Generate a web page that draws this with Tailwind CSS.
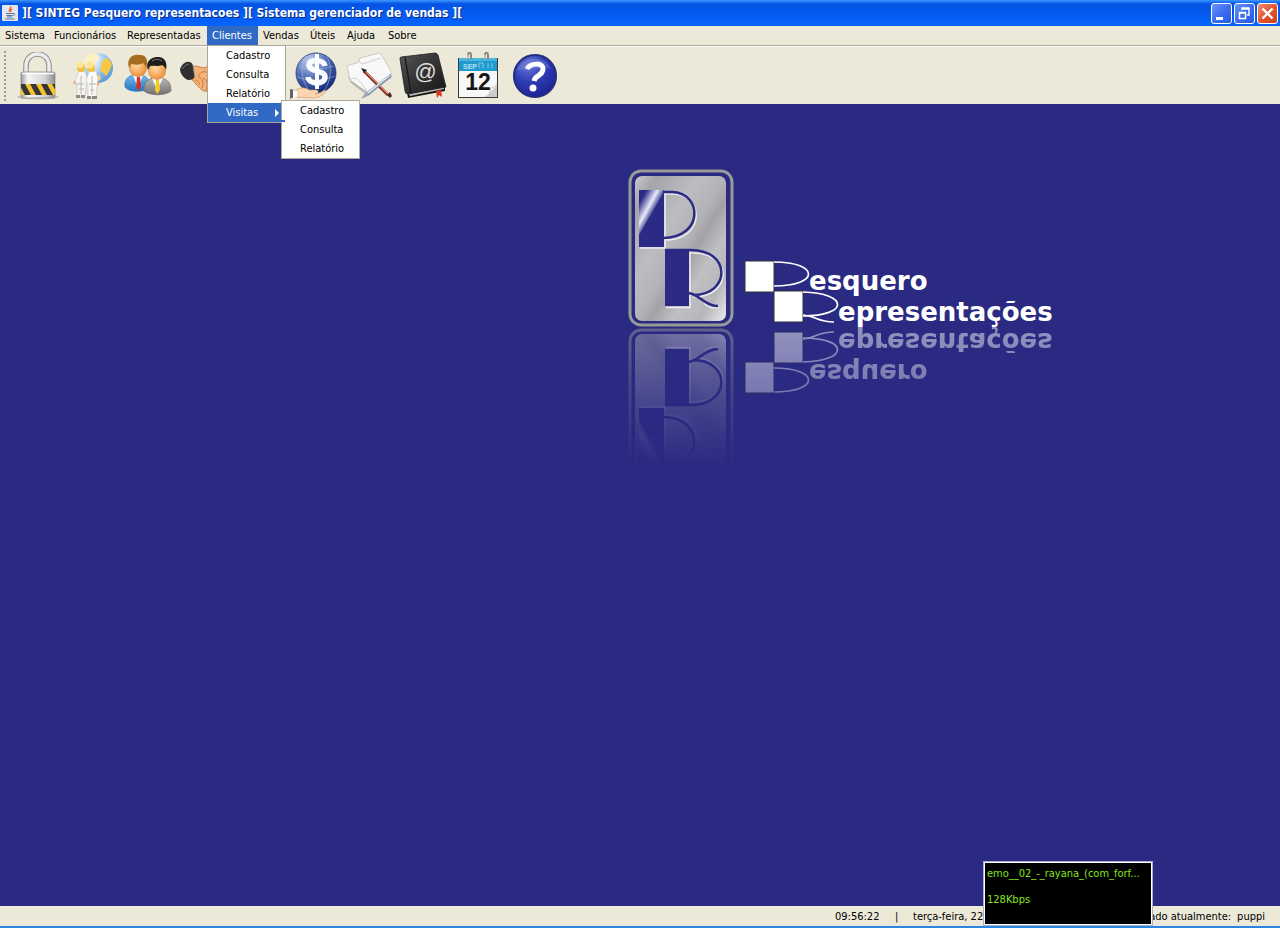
<!DOCTYPE html>
<html lang="pt-BR">
<head>
<meta charset="utf-8">
<title>SINTEG Pesquero representacoes</title>
<script src="https://cdn.jsdelivr.net/npm/@tailwindcss/browser@4"></script>
</head>
<body class="relative flex h-screen flex-col overflow-hidden bg-[#2a2a82] font-['DejaVu_Sans_Condensed','Noto_Sans',sans-serif] text-[11px] leading-[19px] text-black">

<header class="flex h-[26px] shrink-0 items-center justify-between bg-linear-to-b from-[#3d95ff] via-[#0453e4] via-15% to-[#0562fb] to-90% pr-[2px] pl-[2px]">
  <div class="flex items-center gap-1">
    <svg class="size-4" viewBox="0 0 16 16" aria-hidden="true">
      <rect width="16" height="16" rx="1" fill="#e4e4ea"/>
      <path d="M8.500 1.500C10 3 6 4.500 7.500 7M10 4C8 5 8.500 6 8.700 7" fill="none" stroke="#e0642c" stroke-width="1.400"/>
      <path d="M4 8.500H11M4.500 10.500H10.500M5 12H10M11 8.500C13.500 8 13 10.500 11 10.500M3 14H12.500" fill="none" stroke="#54749c" stroke-width="1"/>
    </svg>
    <h1 class="font-['DejaVu_Sans_Condensed','Noto_Sans',sans-serif] text-[12px] leading-[26px] font-bold whitespace-pre text-white [text-shadow:1px_1px_0_#0a2a80]">][ SINTEG Pesquero representacoes ][ Sistema gerenciador de vendas ][</h1>
  </div>
  <div class="flex gap-[2px]">
    <button aria-label="Minimizar" class="size-[21px] rounded-[3px] border border-white bg-linear-to-br from-[#6d96f5] via-[#3c6df0] to-[#2458e4]"><svg viewBox="0 0 19 19"><path d="M4 13H11V16H4Z" fill="#fff"/></svg></button>
    <button aria-label="Restaurar" class="size-[21px] rounded-[3px] border border-white bg-linear-to-br from-[#6d96f5] via-[#3c6df0] to-[#2458e4]"><svg viewBox="0 0 19 19"><path d="M7 6V4H14V11H12M7 5H14" fill="none" stroke="#fff" stroke-width="1.400"/><path d="M4.500 8.500H10.500V14.500H4.500ZM4 9H11" fill="none" stroke="#fff" stroke-width="1.500"/></svg></button>
    <button aria-label="Fechar" class="size-[21px] rounded-[3px] border border-white bg-linear-to-br from-[#ee8c70] via-[#e2552f] to-[#cf4218]"><svg viewBox="0 0 19 19"><path d="M4.500 4.500L14.500 14.500M14.500 4.500L4.500 14.500" stroke="#fff" stroke-width="2.400"/></svg></button>
  </div>
</header>

<nav class="relative flex h-[20px] shrink-0 border-b border-[#aca899] bg-[#ece9d8]" aria-label="Menu principal">
  <button class="w-[49px] pl-[5px] text-left">Sistema</button>
  <button class="w-[73px] pl-[5px] text-left">Funcionários</button>
  <button class="w-[85px] pl-[5px] text-left">Representadas</button>
  <div class="relative z-10 w-[51px]">
    <button class="w-full bg-[#316ac5] pl-[5px] text-left text-white" aria-expanded="true">Clientes</button>
    <div class="absolute top-[19px] left-0 flex w-[79px] flex-col border border-[#aca899] bg-white" role="menu">
      <button role="menuitem" class="pl-[18px] text-left">Cadastro</button>
      <button role="menuitem" class="pl-[18px] text-left">Consulta</button>
      <button role="menuitem" class="pl-[18px] text-left">Relatório</button>
      <div class="relative">
        <button role="menuitem" aria-expanded="true" class="flex w-full items-center justify-between bg-[#316ac5] pr-[6px] pl-[18px] text-white">Visitas
          <svg class="h-2 w-1" viewBox="0 0 4 8" aria-hidden="true"><path d="M0 0L4 4L0 8Z" fill="#fff"/></svg>
        </button>
        <div class="absolute -top-[3px] left-[73px] flex w-[79px] flex-col border border-[#aca899] bg-white" role="menu">
          <button role="menuitem" class="pl-[18px] text-left">Cadastro</button>
          <button role="menuitem" class="pl-[18px] text-left">Consulta</button>
          <button role="menuitem" class="pl-[18px] text-left">Relatório</button>
          <span class="absolute top-[19px] -left-px h-[2px] w-1 bg-[#316ac5]"></span>
        </div>
      </div>
    </div>
  </div>
  <button class="w-[47px] pl-[5px] text-left">Vendas</button>
  <button class="w-[37px] pl-[5px] text-left">Úteis</button>
  <button class="w-[41px] pl-[5px] text-left">Ajuda</button>
  <button class="w-[40px] pl-[5px] text-left">Sobre</button>
</nav>

<div class="flex h-[58px] shrink-0 items-center border-t border-white bg-[#ece9d8] pl-[4px]" role="toolbar" aria-label="Atalhos">
  <span class="mr-1 h-[50px] w-[2px] bg-[repeating-linear-gradient(to_bottom,#999_0_2px,transparent_2px_4px)]"></span>

  <button aria-label="Bloquear" class="flex w-[55px] justify-center"><svg class="size-12" viewBox="0 0 48 48">
    <defs>
      <linearGradient id="steel" x1="0" x2="1"><stop offset="0" stop-color="#999"/><stop offset=".2" stop-color="#f5f5f5"/><stop offset=".7" stop-color="#d5d5d8"/><stop offset="1" stop-color="#8c8c90"/></linearGradient>
      <clipPath id="band"><rect x="7" y="32" width="34" height="11"/></clipPath>
    </defs>
    <ellipse cx="24" cy="45" rx="21" ry="2.500" fill="#c9c6b9"/>
    <path d="M12 21V14C12 -2 35 -2 35 14V21" fill="none" stroke="#8d8d8d" stroke-width="5.500"/>
    <path d="M12 21V14C12 -2 35 -2 35 14V21" fill="none" stroke="#ececee" stroke-width="3.500"/>
    <rect x="7" y="20" width="34" height="26" rx="2" fill="url(#steel)" stroke="#888" stroke-width=".8"/>
    <path d="M8 21.500H40" stroke="#fff" stroke-width="1.500"/>
    <g clip-path="url(#band)"><rect x="7" y="32" width="34" height="11" fill="#f8c22c"/><path d="M5 32H11L17 43H11ZM16 32H22L28 43H22ZM27 32H33L39 43H33ZM38 32H44L50 43H44Z" fill="#363636"/></g>
  </svg></button>

  <button aria-label="Funcionários" class="flex w-[55px] justify-center"><svg class="size-12" viewBox="0 0 48 48">
    <defs><radialGradient id="world" cx=".3" cy=".25" r=".85"><stop offset="0" stop-color="#fff"/><stop offset=".4" stop-color="#b8d8f4"/><stop offset="1" stop-color="#4f91d0"/></radialGradient></defs>
    <circle cx="29" cy="16" r="15" fill="url(#world)"/>
    <path d="M15 10L18 3L27 1L31 6L27 10L24 15L17 16Z" fill="#fdf0c4"/>
    <path d="M34 8L39 6L43 12L41 18L37 24L34 20L31 19L32 13Z" fill="#f4c842"/>
    <path d="M27 25L31 23L32 27L28 30Z" fill="#f1d275"/>
    <g stroke="#c9c9c6" stroke-width=".7">
      <path d="M9 20L16 19L18 25L17 34L16 44H8L8 33L6 29Z" fill="#f5f4f1"/>
      <path d="M20 20L27 19L29 26L28 35L27 45H19L19 33L17 28Z" fill="#fbfaf8"/>
    </g>
    <path d="M12 24V42M23 24V43M8 32H15M20 32H27M10 37H15M21 38H26" stroke="#b9b8b4" stroke-width="1"/>
    <circle cx="12" cy="16" r="4" fill="#f2bd36"/><circle cx="22" cy="16" r="4" fill="#f5c338"/>
    <circle cx="11" cy="13" r="3.500" fill="#ffe592"/><circle cx="21" cy="13" r="3.500" fill="#ffe592"/>
    <path d="M6 28L4 31L7 33ZM28 29L31 32L28 34Z" fill="#f0a677"/>
    <path d="M7 43H11V46H7ZM12 43H16V46H12ZM18 44H22V47H18ZM23 44H28V47H23Z" fill="#8b8a86"/>
  </svg></button>

  <button aria-label="Representadas" class="flex w-[55px] justify-center"><svg class="size-12" viewBox="0 0 48 48">
    <defs>
      <radialGradient id="skin" cx=".4" cy=".35" r=".7"><stop offset="0" stop-color="#ffdca5"/><stop offset="1" stop-color="#ee8a33"/></radialGradient>
      <linearGradient id="blueSuit" x2="0" y2="1"><stop offset="0" stop-color="#76b9ee"/><stop offset="1" stop-color="#2273c4"/></linearGradient>
      <linearGradient id="graySuit" x2="0" y2="1"><stop offset="0" stop-color="#b8b8b8"/><stop offset="1" stop-color="#707070"/></linearGradient>
    </defs>
    <path d="M1 35C0 27 5 24 9 23H18C23 25 25 27 25 36C19 41 4 40 1 35Z" fill="url(#blueSuit)" stroke="#2876bb" stroke-width=".7"/>
    <path d="M9 23L14 36L19 23Z" fill="#fff"/><path d="M13 25H16L17 34L15 39L12 35Z" fill="#d4302b"/>
    <circle cx="14" cy="16" r="8.500" fill="url(#skin)" stroke="#c87928" stroke-width=".6"/>
    <path d="M5 16C2 6 9 2 15 3C22 2 25 8 22 16C21 13 20 12 19 11C14 14 9 12 7 12Z" fill="#a56b20"/>
    <path d="M20 39C19 31 24 27 29 26H38C44 28 47 31 47 39C41 44 26 44 20 39Z" fill="url(#graySuit)" stroke="#686868" stroke-width=".7"/>
    <path d="M28 26L33 38L39 26Z" fill="#fff"/><path d="M32 28H35L36 38L33 42L31 38Z" fill="#f3ca23"/>
    <circle cx="33" cy="19" r="8.500" fill="url(#skin)" stroke="#c87928" stroke-width=".6"/>
    <path d="M24 18C21 10 27 5 33 5C40 4 44 10 42 18C41 15 40 14 38 13C33 15 29 13 26 14Z" fill="#1d1d1d"/><path d="M28 9C31 7 35 7 38 9" fill="none" stroke="#777" stroke-width="1"/>
  </svg></button>

  <button aria-label="Clientes" class="mr-[55px] flex w-[55px] justify-center"><svg class="size-12" viewBox="0 0 48 48">
    <path d="M12 15C16 13 20 15 25 16C30 14 34 13 38 16L41 30C37 36 32 40 28 39C23 40 20 35 17 32C15 30 13 28 12 25Z" fill="#f6b377" stroke="#c97a3c" stroke-width="1"/>
    <path d="M19 24C22 19 26 19 29 21L38 29M16 28C19 28 21 31 20 33M19 25C24 26 25 31 23 36M24 26C29 28 29 34 27 38" fill="none" stroke="#c97639" stroke-width="1"/>
    <path d="M1 17C3 12 7 9 10 10C12 10 14 12 14 14L16 25C14 28 9 29 7 27C4 25 1 21 1 17Z" fill="#303030"/><path d="M3 17C5 14 8 12 10 12" fill="none" stroke="#777"/>
    <path d="M14 13L16 26" fill="none" stroke="#999" stroke-width="1"/>
    <path d="M39 14L47 11V28L41 29Z" fill="#333"/>
  </svg></button>

  <button aria-label="Vendas" class="flex w-[55px] justify-center"><svg class="size-12" viewBox="0 0 48 48">
    <defs><radialGradient id="orb" cx=".35" cy=".2" r=".8"><stop offset="0" stop-color="#c6d4f1"/><stop offset=".5" stop-color="#5874bb"/><stop offset="1" stop-color="#172c7c"/></radialGradient></defs>
    <circle cx="27" cy="21" r="20" fill="url(#orb)" stroke="#284081" stroke-width=".8"/>
    <path d="M10 15C19 18 34 18 44 14M8 25C18 29 34 29 46 24M17 4C10 16 13 31 21 39M38 4C44 15 41 31 35 39" fill="none" stroke="#a8bce3" stroke-width=".8" opacity=".7"/>
    <path d="M28 2V37" stroke="#fff" stroke-width="4"/><path d="M36 14C35 7 20 7 20 13C20 20 36 18 36 25C36 33 20 33 19 25" fill="none" stroke="#fafbff" stroke-width="5.500"/>
    <path d="M6 39C11 34 17 36 20 38H28C30 40 29 42 26 42C32 42 34 38 36 38C37 41 31 46 24 46L6 45Z" fill="#fbd4b0" stroke="#d6986c" stroke-width=".7"/>
    <path d="M1 37L6 38L5 45L1 47Z" fill="#666"/><path d="M4 38L8 39V45L4 46Z" fill="#fff"/>
  </svg></button>

  <button aria-label="Anotações" class="flex w-[55px] justify-center"><svg class="size-12" viewBox="0 0 48 48">
    <path d="M4 25L7 31L23 43L47 26V21Z" fill="#b5b4af"/>
    <path d="M3 14L15 10L16 6L35 1L37 2L48 21L23 40L6 28Z" fill="#f8f8f8" stroke="#c0c0bd" stroke-width=".8"/>
    <path d="M15 9L18 12L37 6M6 28C12 23 15 28 23 39" fill="none" stroke="#cfcfcd"/>
    <path d="M20 19L44 43" stroke="#7b2018" stroke-width="3"/><path d="M20 18L44 42" stroke="#e58b77" stroke-width="1.200"/>
    <path d="M17 16L23 18L20 21Z" fill="#222"/><path d="M43 43L46 40L48 44L46 46Z" fill="#4a2525"/>
    <path d="M47 23L24 42" stroke="#7f93ab" stroke-width="3"/><path d="M46 23L24 41" stroke="#e6eef6" stroke-width="1.500"/>
    <path d="M22 40L26 43L17 47Z" fill="#99a7b5"/>
  </svg></button>

  <button aria-label="Contatos" class="flex w-[55px] justify-center"><svg class="size-12" viewBox="0 0 48 48">
    <defs><linearGradient id="leather" x2="1" y2="1"><stop offset="0" stop-color="#555"/><stop offset=".5" stop-color="#333"/><stop offset="1" stop-color="#151515"/></linearGradient></defs>
    <path d="M2 7L9 46L46 39V34L9 41Z" fill="#181818"/>
    <path d="M10 42L45 35V37L11 44Z" fill="#bbb"/>
    <path d="M2 5L36 1Q38 1 39 3L47 35L9 42Q6 42 6 39L1 7Q1 5 2 5Z" fill="url(#leather)" stroke="#222" stroke-width=".8"/>
    <path d="M6 5L12 41" stroke="#161616" stroke-width="1.200"/>
    <text x="15" y="27" font-family="Liberation Sans, sans-serif" font-size="22" font-style="italic" fill="#ddd">@</text>
    <path d="M37 39L42 38L43 45L40 43L38 46Z" fill="#d63622"/>
  </svg></button>

  <button aria-label="Agenda" class="flex w-[55px] justify-center"><svg class="size-12" viewBox="0 0 48 48">
    <path d="M4 6H44V46H4Z" fill="#383838"/>
    <path d="M5 18H43V45H5Z" fill="#f7f7f7"/><path d="M43 33L32 45H43Z" fill="#ccc"/><path d="M43 31C41 36 38 35 37 36C36 39 36 43 30 45" fill="#fff" stroke="#b5b5b5" stroke-width=".7"/>
    <path d="M5 6H43V19H5Z" fill="#219bce"/><path d="M5 6H43V9H5Z" fill="#47b8df"/>
    <text x="9" y="17" font-family="Liberation Sans, sans-serif" font-size="7" font-weight="bold" fill="#b4e0f0">SEP</text>
    <path d="M25 11V16M29 11V16M25 11H29M34 11V16M38 11V16" stroke="#83cbe5" stroke-width="1"/>
    <text x="24" y="38" text-anchor="middle" font-family="Liberation Sans, sans-serif" font-size="23" font-weight="bold" fill="#151515">12</text>
    <path d="M14 8V3C14 0 17 0 17 3V7M31 8V3C31 0 34 0 34 3V7" fill="none" stroke="#888" stroke-width="2"/><path d="M14 7V3M31 7V3" stroke="#eee"/>
  </svg></button>

  <button aria-label="Ajuda" class="flex w-[55px] justify-center"><svg class="size-12" viewBox="0 0 48 48">
    <defs><radialGradient id="helpBlue" cx=".35" cy=".25" r=".8"><stop offset="0" stop-color="#6675d3"/><stop offset=".5" stop-color="#2f3cb4"/><stop offset="1" stop-color="#1c2390"/></radialGradient></defs>
    <circle cx="26" cy="24" r="22" fill="#9a9fba"/><circle cx="26" cy="24" r="21" fill="url(#helpBlue)" stroke="#252d81" stroke-width="2"/>
    <path d="M8 18C14 4 35 2 42 17C31 13 20 20 8 18Z" fill="#8794e0" opacity=".35"/>
    <path d="M18 17C21 11 34 10 34 17C34 24 26 23 25 29" fill="none" stroke="#fff" stroke-width="5"/><circle cx="24" cy="36" r="3.500" fill="#fff"/>
  </svg></button>
</div>

<main class="min-h-0 flex-1 pt-[61px]">
  <svg class="ml-[49%] h-[305px] w-[535px]" viewBox="627 165 535 305" role="img" aria-label="Pesquero Representações">
    <defs>
      <linearGradient id="silver" x2="1" y2="1"><stop offset="0" stop-color="#c9c9cd"/><stop offset=".12" stop-color="#a5a4a9"/><stop offset=".35" stop-color="#bdbcc0"/><stop offset=".5" stop-color="#b4b3b8"/><stop offset=".58" stop-color="#a3a2a7"/><stop offset=".7" stop-color="#c0bfc4"/><stop offset=".85" stop-color="#b7b6bb"/><stop offset="1" stop-color="#ececee"/></linearGradient>
      <linearGradient id="shine" x1="0" y1="0" x2="1" y2="1"><stop offset=".15" stop-color="#2b2b86"/><stop offset=".38" stop-color="#e8eaf8"/><stop offset=".55" stop-color="#2b2b86"/></linearGradient>
      <linearGradient id="fadeBadge" x2="0" y2="1"><stop offset="0" stop-color="#fff" stop-opacity=".5"/><stop offset=".5" stop-color="#fff" stop-opacity=".22"/><stop offset="1" stop-color="#fff" stop-opacity="0"/></linearGradient>
      <linearGradient id="fadeWord" x2="0" y2="1"><stop offset="0" stop-color="#fff" stop-opacity=".5"/><stop offset="1" stop-color="#fff" stop-opacity=".35"/></linearGradient>
      <mask id="maskBadge" maskUnits="userSpaceOnUse" x="627" y="328" width="110" height="138"><rect x="627" y="328" width="110" height="138" fill="url(#fadeBadge)"/></mask>
      <mask id="maskWord" maskUnits="userSpaceOnUse" x="740" y="326" width="420" height="74"><rect x="740" y="326" width="420" height="74" fill="url(#fadeWord)"/></mask>
    </defs>
    <g id="badge">
      <rect x="630" y="171" width="102" height="154" rx="11" fill="#2a2a82" stroke="#999998" stroke-width="3"/>
      <rect x="635" y="176" width="91" height="145" rx="7" fill="url(#silver)"/>
      <g fill="none" stroke="#ececf0" stroke-width="1.500">
        <path d="M665 194H674C705 196 705 240 665 240M665 191V248H640"/>
        <path d="M690 253C734 251 733 297 693 297M690 252V307.500H666M704 303C708 308 712 308 719 308"/>
      </g>
      <rect x="639" y="190" width="25" height="57" fill="#2b2b86"/>
      <path d="M639 190H664V192L639 235Z" fill="url(#shine)"/>
      <rect x="665" y="249" width="24" height="57" fill="#2b2b86"/>
      <g fill="none" stroke="#2b2b86" stroke-width="2.500">
        <path d="M663 192H673C703 194 703 238 663 238"/>
        <path d="M665 250H689C732 249 731 295 693 295M689 293C700 295 705 306 718 306"/>
      </g>
    </g>
    <g id="wordmark">
      <g fill="#fff" stroke="#30303f" stroke-width="1"><rect x="745" y="261" width="29" height="31"/><rect x="774" y="291" width="29" height="31"/></g>
      <path d="M774 262C820 262 820 286 774 286M803 292C849 293 849 316 803 316M803 315C816 316 817 322 834 322" fill="none" stroke="#fff" stroke-width="1.700"/>
      <g font-family="DejaVu Sans, sans-serif" font-size="26" font-weight="bold" fill="#fff">
        <text x="809" y="290">esquero</text>
        <text x="838" y="321">epresentações</text>
      </g>
    </g>
    <g mask="url(#maskBadge)" aria-hidden="true"><use href="#badge" transform="translate(0 655) scale(1 -1)"/></g>
    <g mask="url(#maskWord)" aria-hidden="true"><use href="#wordmark" transform="translate(0 654) scale(1 -1)"/></g>
  </svg>
</main>

<footer class="flex h-[22px] shrink-0 justify-end border-b-2 border-[#2a86e0] bg-[#ece9d8] pr-[15px] leading-[21px] whitespace-nowrap">
  <time class="w-[60px]">09:56:22</time>
  <span class="w-[18px]">|</span>
  <div class="flex w-[352px] justify-between">
    <span>terça-feira, 22</span>
    <span class="flex gap-[6px]"><span>Logado atualmente:</span><span>puppi</span></span>
  </div>
</footer>

<aside class="absolute right-[127px] bottom-[2px] h-[65px] w-[170px] border border-[#a9aecb] bg-white p-px" aria-label="Reprodução">
  <div class="h-full bg-black px-[2px] pt-px text-[#85e51b]">
    <p class="leading-[20px] whitespace-nowrap">emo__02_-_rayana_(com_forf...</p>
    <p class="pt-[6px] leading-[20px]">128Kbps</p>
  </div>
</aside>
</body>
</html>
